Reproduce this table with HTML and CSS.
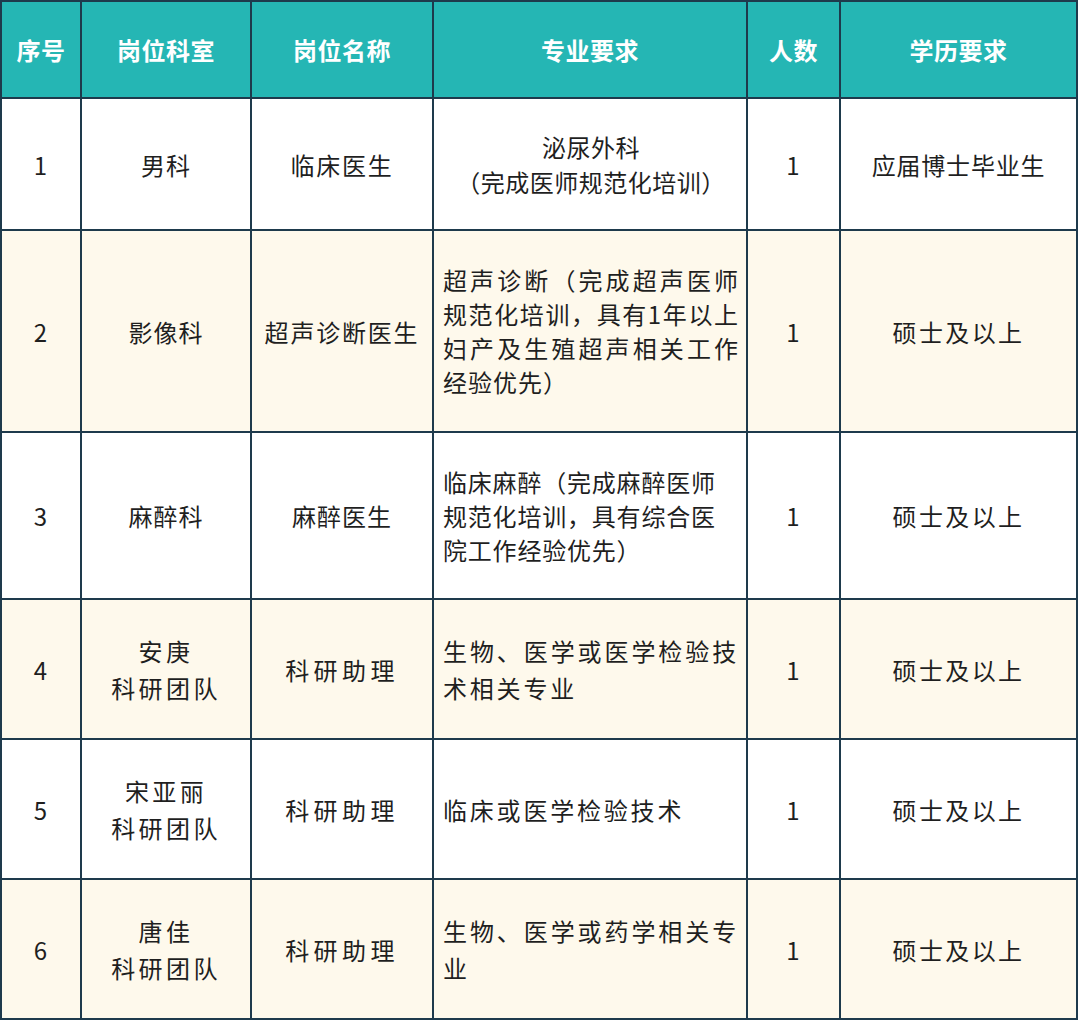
FILE: index.html
```html
<!DOCTYPE html>
<html lang="zh-CN">
<head>
<meta charset="utf-8">
<link rel="stylesheet" href="styles.css">
</head>
<body>
<table class="jobs">
  <colgroup>
    <col class="c1"><col class="c2"><col class="c3"><col class="c4"><col class="c5"><col class="c6">
  </colgroup>
  <thead>
    <tr class="head">
      <th>序号</th><th>岗位科室</th><th>岗位名称</th><th>专业要求</th><th>人数</th><th>学历要求</th>
    </tr>
  </thead>
  <tbody>
    <tr class="r1">
      <td>1</td><td>男科</td><td class="pos">临床医生</td>
      <td class="major center">泌尿外科<br>（完成医师规范化培训）</td>
      <td>1</td><td class="edu-first">应届博士毕业生</td>
    </tr>
    <tr class="r2 alt">
      <td>2</td><td>影像科</td><td class="pos">超声诊断医生</td>
      <td class="major just">超声诊断（完成超声医师规范化培训，具有1年以上妇产及生殖超声相关工作经验优先）</td>
      <td>1</td><td class="edu">硕士及以上</td>
    </tr>
    <tr class="r3">
      <td>3</td><td>麻醉科</td><td>麻醉医生</td>
      <td class="major plain">临床麻醉（完成麻醉医师规范化培训，具有综合医院工作经验优先）</td>
      <td>1</td><td class="edu">硕士及以上</td>
    </tr>
    <tr class="r4 alt tall">
      <td>4</td><td class="team">安庚<br>科研团队</td><td class="assist">科研助理</td>
      <td class="major just wide">生物、医学或医学检验技术相关专业</td>
      <td>1</td><td class="edu">硕士及以上</td>
    </tr>
    <tr class="r5 tall">
      <td>5</td><td class="team">宋亚丽<br>科研团队</td><td class="assist">科研助理</td>
      <td class="major wide">临床或医学检验技术</td>
      <td>1</td><td class="edu">硕士及以上</td>
    </tr>
    <tr class="r6 alt tall">
      <td>6</td><td class="team">唐佳<br>科研团队</td><td class="assist">科研助理</td>
      <td class="major just wide">生物、医学或药学相关专业</td>
      <td>1</td><td class="edu">硕士及以上</td>
    </tr>
  </tbody>
</table>
</body>
</html>
```

FILE: styles.css
```css
html, body {
  margin: 0;
  padding: 0;
  background: #ffffff;
}

.jobs {
  border-collapse: collapse;
  table-layout: fixed;
  width: 1077px;
  font-family: "Noto Sans CJK SC", "Noto Sans", sans-serif;
  font-size: 24px;
  color: #1f1f1f;
}

.c1 { width: 80px; }
.c2 { width: 170px; }
.c3 { width: 182px; }
.c4 { width: 314px; }
.c5 { width: 93px; }
.c6 { width: 237px; }

.jobs th,
.jobs td {
  border: 2px solid #1e3a4c;
  text-align: center;
  vertical-align: middle;
  padding: 0 6px;
  line-height: 35px;
  letter-spacing: 1px;
}

.jobs th {
  background: #25b6b4;
  color: #ffffff;
  font-weight: 700;
  letter-spacing: 0.5px;
}

.head { height: 97px; }
.r1 { height: 132px; }
.r2 { height: 202px; }
.r3 { height: 167px; }
.r4, .r5, .r6 { height: 140px; }

.alt td { background: #fef9ec; }

.tall td { line-height: 37px; }

.jobs td.pos { letter-spacing: 1.8px; }
.jobs td.edu-first { letter-spacing: 0.8px; }
.jobs td.edu { letter-spacing: 2.4px; }
.jobs td.team { letter-spacing: 3.4px; }
.jobs td.assist { letter-spacing: 4.4px; }

.jobs td.major {
  text-align: left;
  padding: 0 7px 0 9px;
  line-height: 34px;
}

.jobs td.major.center {
  text-align: center;
  letter-spacing: 0.5px;
  line-height: 35px;
}

.jobs td.major.just {
  text-align: justify;
  letter-spacing: 1px;
}

.jobs td.major.plain {
  letter-spacing: 0.8px;
}

.jobs td.major.wide {
  letter-spacing: 2.8px;
  line-height: 37px;
}
```
